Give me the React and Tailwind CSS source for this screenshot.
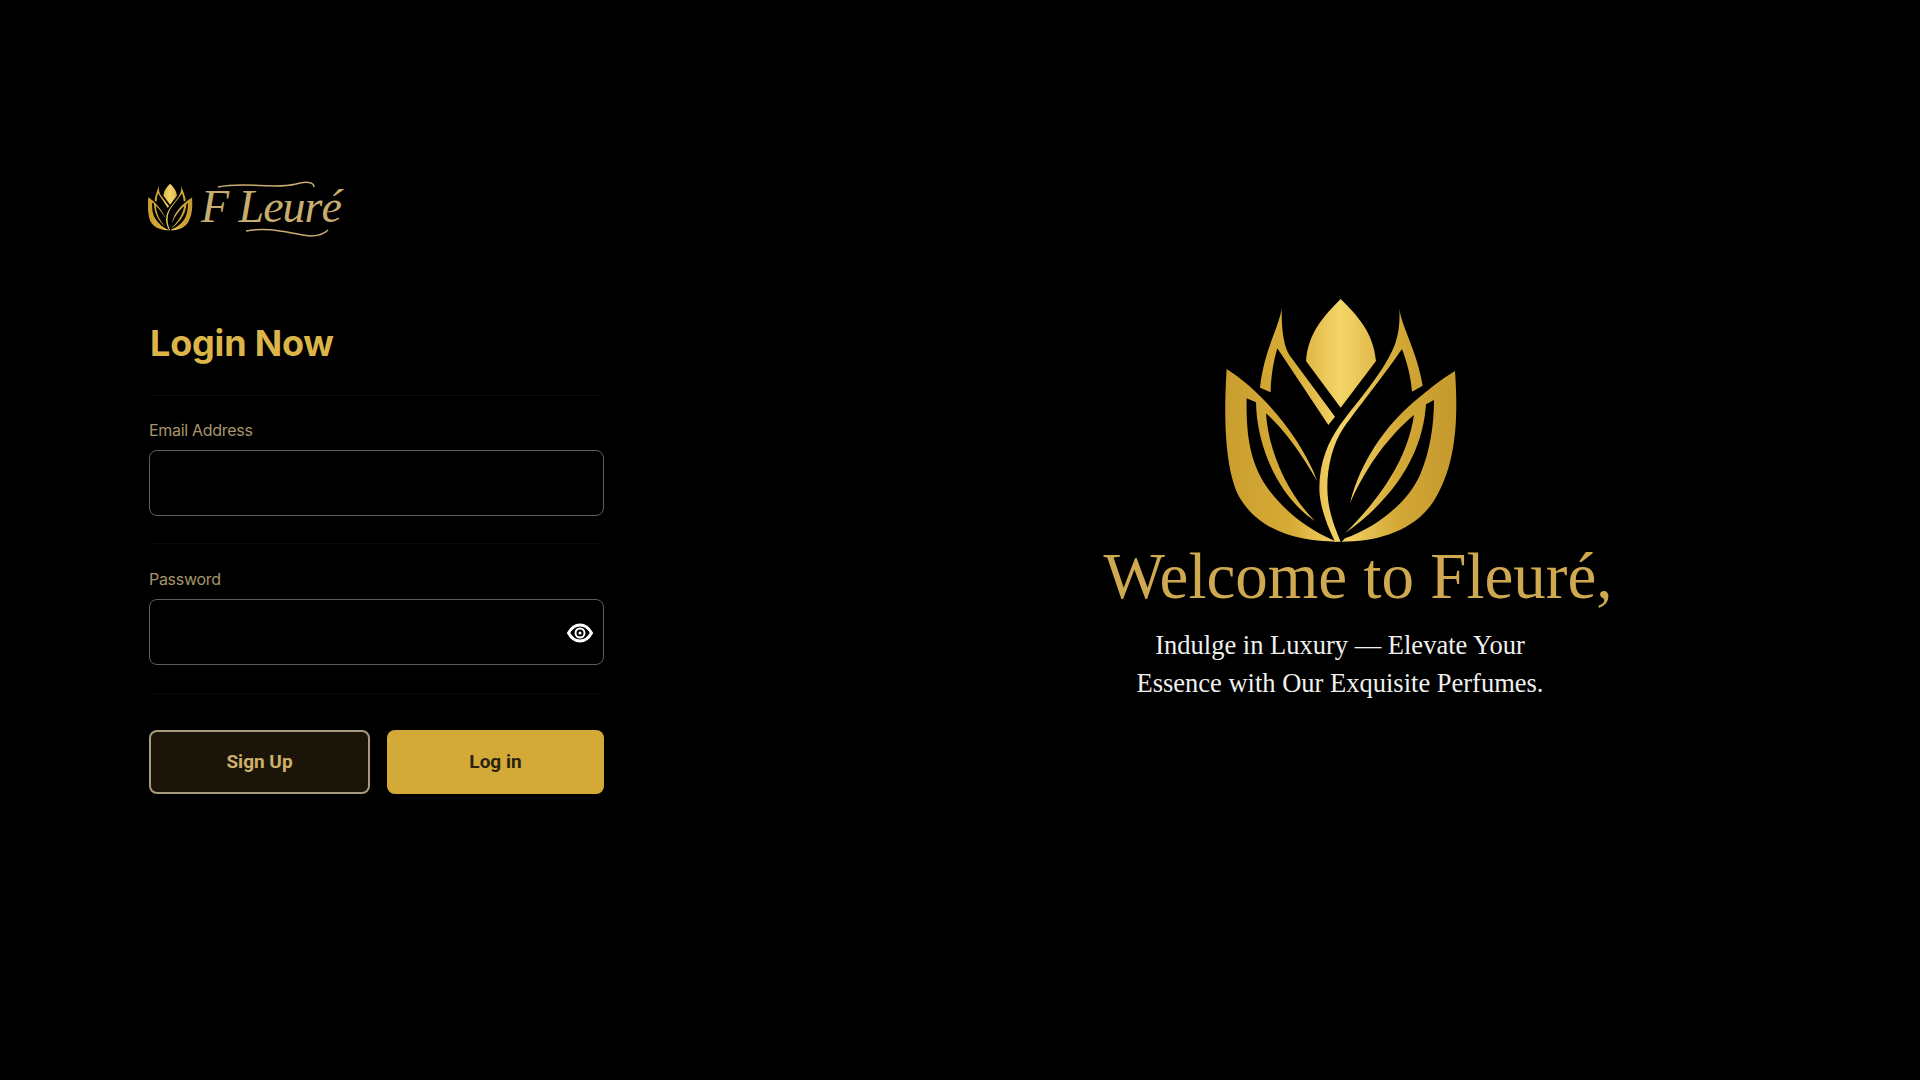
import React from 'react';

// gold lotus mark, coordinates taken from the reference crop
function LotusMark({ id, className }) {
  return (
    <svg viewBox="60 30 720 750" className={className}>
      <defs>
        <linearGradient id={id} x1="60" y1="0" x2="780" y2="0" gradientUnits="userSpaceOnUse">
          <stop offset="0" stopColor="#c89d2e" />
          <stop offset="0.3" stopColor="#d6ab36" />
          <stop offset="0.5" stopColor="#f5d568" />
          <stop offset="0.75" stopColor="#d2a735" />
          <stop offset="1" stopColor="#c4982d" />
        </linearGradient>
      </defs>
      <g fill={`url(#${id})`}>
        <path d="M422 42C470 90 520 140 528 228L422 368L318 228C325 140 375 90 422 42Z" />
        <path d="M245 70C238 125 192 195 180 308L212 322C212 280 220 230 232 190L385 420L405 395L268 210C246 175 245 110 245 70Z" />
        <path d="M598 70C604 125 652 200 668 302L636 320C632 270 620 230 606 192C560 260 480 360 430 430C390 490 375 580 385 650C392 700 410 740 422 770L405 770C380 720 358 660 358 610C358 530 385 470 420 420C480 340 560 250 586 175C598 140 600 100 598 70Z" />
        <path d="M80 252C180 315 300 450 352 588C300 500 250 430 198 385C205 500 265 630 345 708C240 640 170 490 168 352L140 340C138 450 150 520 190 590C240 670 320 730 392 762L410 770C300 770 180 740 120 640C75 560 70 400 80 252Z" />
        <path d="M765 258C775 400 770 540 700 650C640 740 530 770 425 770L435 760C520 730 620 660 660 570C690 500 702 420 702 345L678 358C670 480 610 620 435 745C520 660 620 540 642 390C570 450 500 540 450 655C480 530 560 420 640 352C680 318 720 285 765 258Z" />
      </g>
    </svg>
  );
}

function EyeIcon() {
  return (
    <svg viewBox="0 0 26 20" className="w-[26px] h-5" fill="none" stroke="white">
      <path d="M1.5 10C4.5 4.5 8.5 2 13 2s8.5 2.5 11.500 8C21.500 15.500 17.500 18 13 18S4.500 15.500 1.500 10Z" strokeWidth="3" />
      <circle cx="13" cy="10" r="4.500" strokeWidth="2" />
      <circle cx="13" cy="10" r="1.500" fill="white" stroke="none" />
    </svg>
  );
}

function Divider() {
  return <div className="h-px mx-[3px] bg-[#0a0a0a]" />;
}

function Field({ label, children }) {
  return (
    <div>
      <label className="block text-[16px] leading-5 tracking-[-0.3px] text-[#a8946c]">{label}</label>
      <div className="relative mt-[10px]">
        <input className="block w-full h-[66px] rounded-[8px] border-[1.5px] border-[#625d54] bg-black outline-none" />
        {children}
      </div>
    </div>
  );
}

export default function App() {
  return (
    <div className="flex w-full h-screen overflow-hidden bg-black font-['Inter',sans-serif]">
      <div className="w-[760px] pl-[149px] pt-[178px]">
        <div className="relative flex items-center h-[58px] -ml-[2px]">
          <LotusMark id="gold-small" className="w-[46px] h-[48px]" />
          <span className="ml-2 font-['Liberation_Serif',serif] italic text-[46px] leading-none tracking-[-1px] text-[#c8ad70]">F Leuré</span>
          {/* logo flourishes over the wordmark */}
          <svg viewBox="0 0 150 60" className="absolute left-[55px] top-0 w-[150px] h-[60px]" fill="none" stroke="#c8ad70" strokeWidth="1.500">
            <path d="M16 9C45 3 70 12 94 6C104 3 112 4 112 9" />
            <path d="M44 53C70 48 88 56 108 58C116 58 122 56 126 52" />
          </svg>
        </div>
        <h1 className="mt-[85px] ml-px text-[36px] leading-[44px] font-bold tracking-[-0.2px] text-[#dcb548]">Login Now</h1>
        <div className="w-[455px]">
          <div className="mt-[30px]"><Divider /></div>
          <div className="mt-6">
            <Field label="Email Address" />
          </div>
          <div className="mt-[27px]"><Divider /></div>
          <div className="mt-[25px]">
            <Field label="Password">
              <button className="absolute right-[11px] top-[24px]"><EyeIcon /></button>
            </Field>
          </div>
          <div className="mt-[28px]"><Divider /></div>
          <div className="flex gap-[17px] mt-[36px]">
            <button className="w-[221px] h-[64px] rounded-[8px] border-2 border-[#a89a7c] bg-[#1a1409] text-[19px] font-bold text-[#cdb06a] font-['Roboto',sans-serif]">Sign Up</button>
            <button className="flex-1 h-[64px] rounded-[8px] bg-[#d3aa38] text-[19px] font-bold text-[#2b2312] font-['Roboto',sans-serif]">Log in</button>
          </div>
        </div>
      </div>
      <div className="flex-1 flex flex-col items-center pt-[295px]">
        <LotusMark id="gold-large" className="w-[240px] h-[250px]" />
        <h2 className="ml-[36px] -mt-[4px] text-[65px] leading-[70px] font-['Liberation_Serif',serif] text-[#cfa94f] whitespace-nowrap">Welcome to Fleuré,</h2>
        <p className="mt-[15px] text-center text-[26.500px] leading-[38px] font-['Liberation_Serif',serif] text-[#f0f0ee]">
          Indulge in Luxury — Elevate Your<br />Essence with Our Exquisite Perfumes.
        </p>
      </div>
    </div>
  );
}
